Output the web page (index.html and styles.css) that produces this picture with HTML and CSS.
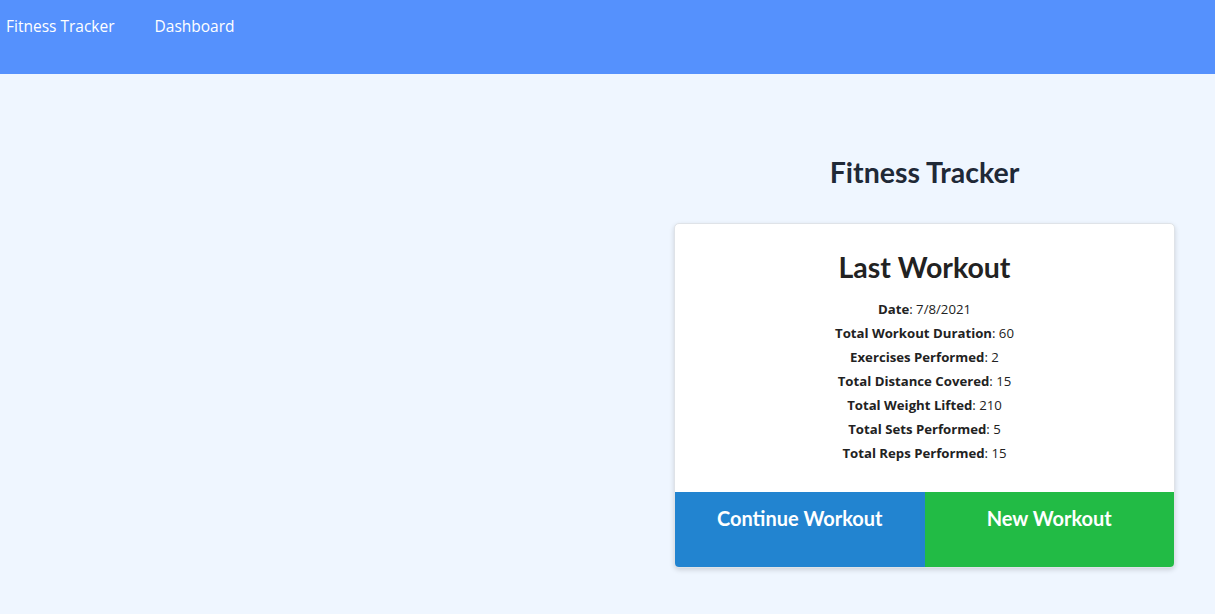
FILE: index.html
```html
<!DOCTYPE html>
<html lang="en">
<head>
<meta charset="utf-8">
<title>Fitness Tracker</title>
<link rel="stylesheet" href="styles.css">
</head>
<body>
<nav class="nav">
  <a class="nav-link" href="#">Fitness Tracker</a>
  <a class="nav-link" href="#">Dashboard</a>
</nav>
<main class="main">
  <div class="spacer"></div>
  <section class="panel">
    <h1 class="page-title">Fitness Tracker</h1>
    <div class="card">
      <div class="card-body">
        <h2 class="card-title">Last Workout</h2>
        <p class="stat"><strong>Date</strong>: 7/8/2021</p>
        <p class="stat"><strong>Total Workout Duration</strong>: 60</p>
        <p class="stat"><strong>Exercises Performed</strong>: 2</p>
        <p class="stat"><strong>Total Distance Covered</strong>: 15</p>
        <p class="stat"><strong>Total Weight Lifted</strong>: 210</p>
        <p class="stat"><strong>Total Sets Performed</strong>: 5</p>
        <p class="stat"><strong>Total Reps Performed</strong>: 15</p>
      </div>
      <div class="actions">
        <a class="btn btn-continue" href="#">Continue Workout</a>
        <a class="btn btn-new" href="#">New Workout</a>
      </div>
    </div>
  </section>
</main>
</body>
</html>
```
FILE: styles.css
```css
* { box-sizing: border-box; }
html, body { margin: 0; padding: 0; }
body {
  background: #eff6ff;
  font-family: "Open Sans", "Noto Sans", sans-serif;
  color: #1f2937;
  height: 614px;
  overflow: hidden;
}
.nav {
  background: #5591fd;
  height: 74px;
  display: flex;
  align-items: flex-start;
  padding: 15px 6px 0;
  gap: 40px;
}
.nav-link {
  color: #ffffff;
  text-decoration: none;
  font-size: 15.5px;
  line-height: 22px;
}
.main {
  display: flex;
}
.spacer { flex: 1; }
.panel {
  width: 501px;
  margin-right: 40px;
  padding-top: 78px;
  display: flex;
  flex-direction: column;
  align-items: stretch;
}
.page-title {
  font-family: Lato, sans-serif;
  font-weight: 700;
  font-size: 28.5px;
  line-height: 40px;
  margin: 0 0 31px;
  text-align: center;
  color: #1f2937;
}
.card {
  background: #ffffff;
  border: 1px solid #dfe3e8;
  border-radius: 5px;
  box-shadow: 0 2px 5px rgba(0,0,0,0.15);
  overflow: hidden;
}
.card-body {
  padding: 23px 16px 27px;
  text-align: center;
}
.card-title {
  font-family: Lato, sans-serif;
  font-weight: 700;
  font-size: 28.5px;
  line-height: 40px;
  margin: 0 0 10px;
  color: #222;
}
.stat {
  margin: 0;
  font-size: 13.2px;
  line-height: 24px;
  color: #222;
}
.stat strong { font-weight: 700; }
.actions {
  display: flex;
  height: 75px;
}
.btn {
  flex: 1;
  color: #ffffff;
  text-decoration: none;
  text-align: center;
  font-family: Lato, sans-serif;
  font-weight: 700;
  font-size: 20px;
  padding-top: 12px;
  line-height: 28px;
}
.btn-continue { background: #2284d0; }
.btn-new { background: #22bb45; }
```
